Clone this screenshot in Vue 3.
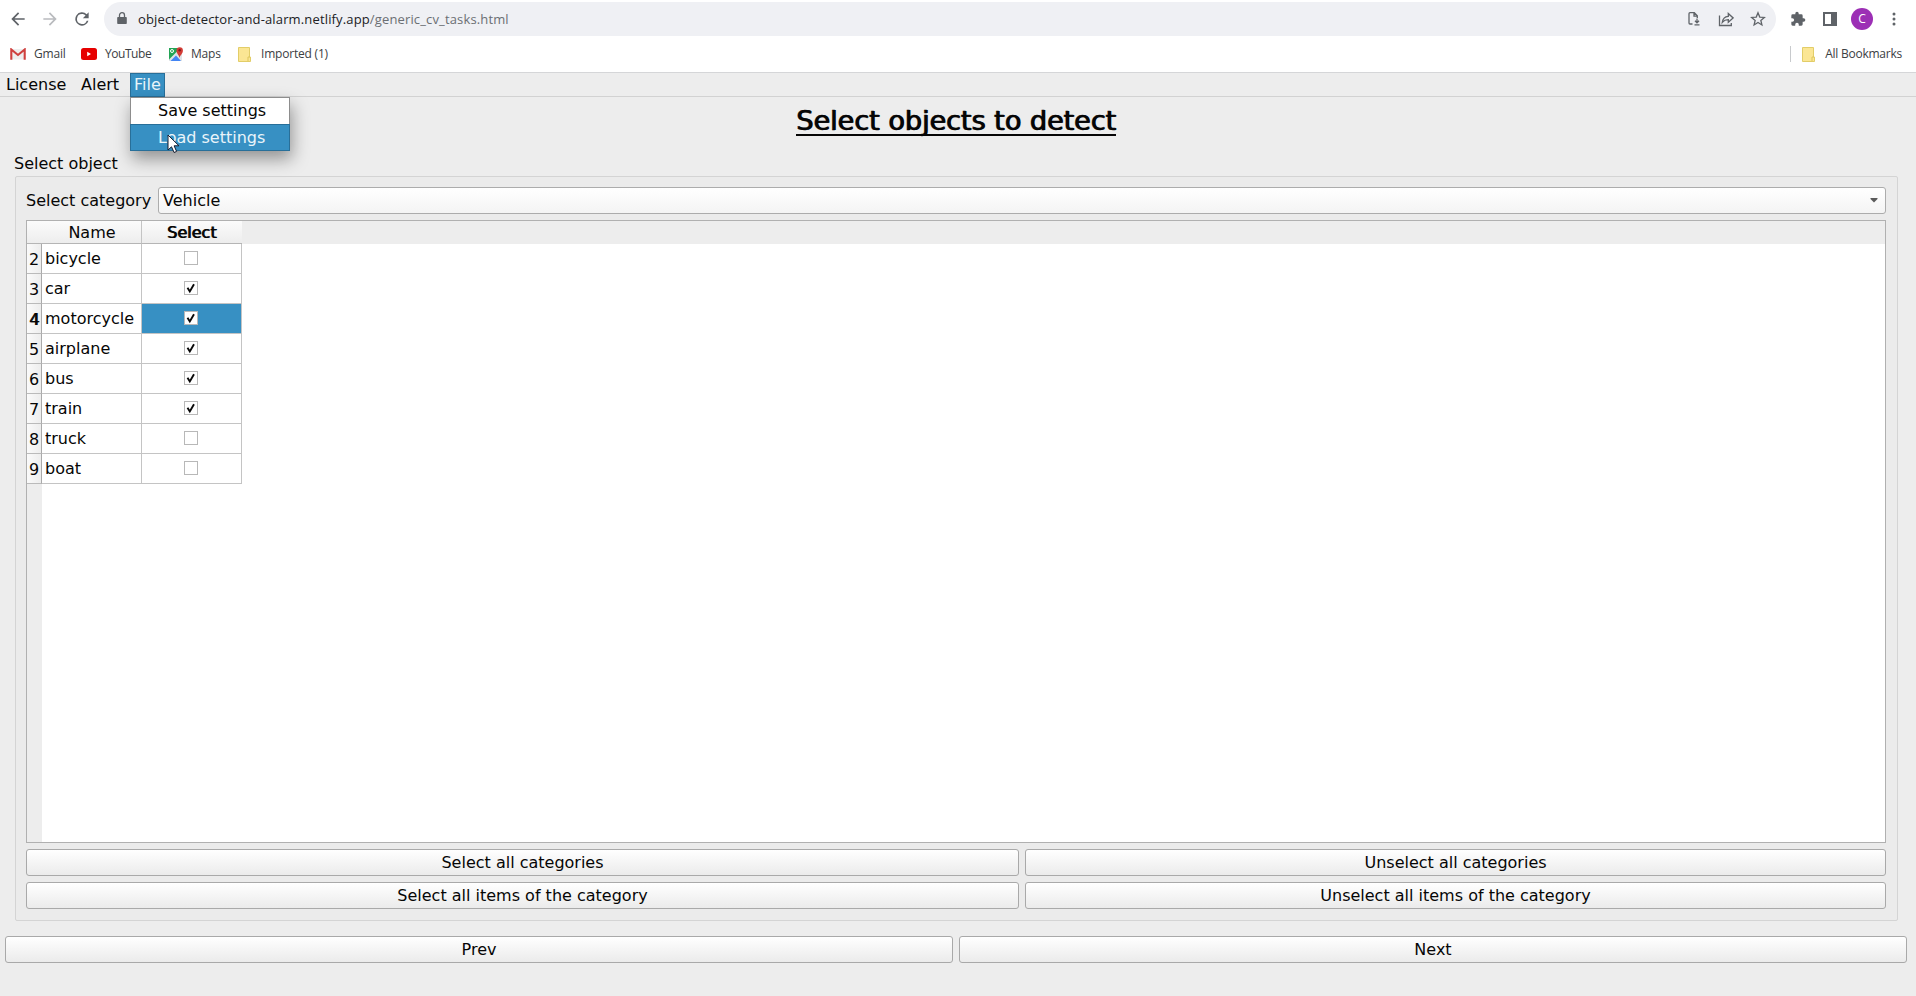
<script setup>
const bookmarks = [
  { id: 'gmail', label: 'Gmail', cls: 'b-gmail' },
  { id: 'youtube', label: 'YouTube', cls: 'b-youtube' },
  { id: 'maps', label: 'Maps', cls: 'b-maps' },
  { id: 'folder', label: 'Imported (1)', cls: 'b-imported' },
]
const rows = [
  { n: 2, name: 'bicycle', on: false },
  { n: 3, name: 'car', on: true },
  { n: 4, name: 'motorcycle', on: true, current: true },
  { n: 5, name: 'airplane', on: true },
  { n: 6, name: 'bus', on: true },
  { n: 7, name: 'train', on: true },
  { n: 8, name: 'truck', on: false },
  { n: 9, name: 'boat', on: false },
]
</script>

<template>
  <div class="window">
    <header class="browser">
      <div class="toolbar">
        <svg class="nav" viewBox="0 0 24 24"><path d="M20 11H7.83l5.59-5.59L12 4l-8 8 8 8 1.410-1.410L7.830 13H20z" /></svg>
        <svg class="nav dim" viewBox="0 0 24 24"><path d="M12 4l-1.410 1.410L16.170 11H4v2h12.170l-5.580 5.590L12 20l8-8z" /></svg>
        <svg class="nav" viewBox="0 0 24 24"><path d="M17.650 6.350A8 8 0 1 0 19.730 14h-2.080A6 6 0 1 1 12 6c1.660 0 3.140.69 4.220 1.780L13 11h7V4z" /></svg>
        <div class="omnibox">
          <svg class="lock" viewBox="0 0 10 13"><path d="M1 5h8a.8.8 0 0 1 .8.8v5.400a.8.8 0 0 1-.8.8H1a.8.8 0 0 1-.8-.8V5.800A.8.8 0 0 1 1 5z" fill="#5f6368" /><path d="M2.500 5V3.200a2.500 2.500 0 0 1 5 0V5" fill="none" stroke="#5f6368" stroke-width="1.300" /></svg>
          <span class="url">object-detector-and-alarm.netlify.app<span class="path">/generic_cv_tasks.html</span></span>
          <div class="omni-icons">
            <svg viewBox="0 0 16 16"><path d="M6.500 13H4a1 1 0 0 1-1-1V2.700a1 1 0 0 1 1-1h4.300l3 3V7M8 1.900v3.200h3.200M11 7.500v4M9 9.800l2 2 2-2M8.500 13.800h5" /></svg>
            <svg viewBox="0 0 16 16"><path d="M1.500 4.500v10h11.800V12M4.300 11.300c.4-3.600 2.400-5.700 6-6V2.500l4.800 4.400-4.800 4.300V8.600c-2.600 0-4.500.9-6 2.700z" /></svg>
            <svg viewBox="0 0 16 16"><path d="M8 1.800l1.750 4.250 4.600.4-3.500 3 1.050 4.500L8 11.550l-3.900 2.400 1.050-4.500-3.500-3 4.600-.4z" /></svg>
          </div>
        </div>
        <svg class="puzzle" viewBox="0 0 24 24"><path d="M20.500 11H19V7a2 2 0 0 0-2-2h-4V3.500a2.500 2.500 0 0 0-5 0V5H4a2 2 0 0 0-2 2v3.800h1.500a2.700 2.700 0 0 1 0 5.400H2V20a2 2 0 0 0 2 2h3.800v-1.500a2.700 2.700 0 0 1 5.400 0V22H17a2 2 0 0 0 2-2v-4h1.500a2.500 2.500 0 0 0 0-5z" /></svg>
        <svg class="panel" viewBox="0 0 14 14"><path fill-rule="evenodd" d="M0 0h14v14H0zM2 2v10h6V2z" /></svg>
        <span class="avatar">C</span>
        <svg class="dots" viewBox="0 0 4 14"><circle cx="2" cy="2" r="1.500" /><circle cx="2" cy="7" r="1.500" /><circle cx="2" cy="12" r="1.500" /></svg>
      </div>
      <div class="bookmarks">
        <div v-for="b in bookmarks" :key="b.id" class="bookmark" :class="b.cls">
          <svg v-if="b.id === 'gmail'" width="16" height="12" viewBox="0 0 16 12"><path d="M1 1h14v10.500H1z" fill="#eee" /><path d="M1.300 11.700V1.500L8 7l6.700-5.500v10.200" fill="none" stroke="#cf403e" stroke-width="2.100" /></svg>
          <svg v-else-if="b.id === 'youtube'" width="16" height="12" viewBox="0 0 16 12"><rect width="16" height="12" rx="2.500" fill="#e60000" /><path d="M6.200 3.800v4.400L10 6z" fill="#fff" /></svg>
          <svg v-else-if="b.id === 'maps'" width="16" height="16" viewBox="0 0 16 16"><path d="M1 2h11v6L7 9l-6 6z" fill="#23a455" /><path d="M1 13.500L12.500 2 14 4v11H1z" fill="#dfe4e8" /><path d="M2.500 15L8 9.500l5 5.500z" fill="#4285f4" /><circle cx="4" cy="5" r="1.500" fill="none" stroke="#fff" /><path d="M11.500 12c-.3-3-3-4-3-7.500a3.200 3.200 0 0 1 6.400 0C14.900 8 12 9 11.500 12z" fill="#d33b35" /><circle cx="11.700" cy="4.300" r="1.200" fill="#80191b" /></svg>
          <svg v-else width="13" height="15" viewBox="0 0 13 15"><path d="M.5.500h11v9.500h1v4.500H.5z" fill="#fbe694" stroke="#e2cd68" /><path d="M10 14v-4h2" fill="none" stroke="#dfc75c" /></svg>
          <span>{{ b.label }}</span>
        </div>
        <div class="bookmark all">
          <svg width="13" height="15" viewBox="0 0 13 15"><path d="M.5.500h11v9.500h1v4.500H.5z" fill="#fbe694" stroke="#e2cd68" /><path d="M10 14v-4h2" fill="none" stroke="#dfc75c" /></svg>
          <span>All Bookmarks</span>
        </div>
      </div>
    </header>

    <nav class="menubar">
      <span class="menu license">License</span>
      <span class="menu alert">Alert</span>
      <div class="menu file">
        File
        <div class="dropdown">
          <div class="item">Save settings</div>
          <div class="item active">Load settings</div>
          <svg class="cursor" width="13" height="20" viewBox="0 0 13 20"><path d="M1 1v15l3.500-3.200 2.600 5.700 2.500-1.100-2.500-5.600H12z" fill="#fff" stroke="#141a2c" /></svg>
        </div>
      </div>
    </nav>

    <main class="content">
      <h1><span>Select objects to detect</span></h1>
      <div class="group-title">Select object</div>
      <section class="group">
        <div class="category">
          <label>Select category</label>
          <div class="combo">Vehicle<svg width="8" height="5" viewBox="0 0 8 5"><path d="M.5 0h7v1L4 4.500.5 1z" fill="#5a5a5a" /></svg></div>
        </div>
        <div class="table">
          <div class="thead">
            <div class="th name">Name</div>
            <div class="th sel">Select</div>
          </div>
          <div class="tbody">
            <div v-for="r in rows" :key="r.n" class="tr">
              <div class="num" :class="{ bold: r.current }">{{ r.n }}</div>
              <div class="cell">{{ r.name }}</div>
              <div class="check" :class="{ current: r.current }">
                <span class="box"><svg v-if="r.on" width="12" height="12" viewBox="0 0 12 12"><path d="M2.500 5.800l2.300 3.700L9 2.200" fill="none" stroke="#080808" stroke-width="1.900" /></svg></span>
              </div>
            </div>
          </div>
        </div>
        <div class="actions">
          <button>Select all categories</button>
          <button>Unselect all categories</button>
          <button>Select all items of the category</button>
          <button>Unselect all items of the category</button>
        </div>
      </section>
      <div class="pager">
        <button>Prev</button>
        <button>Next</button>
      </div>
    </main>
  </div>
</template>

<style>
body { margin: 0; background: #ededed; }
</style>

<style scoped>
* { box-sizing: border-box; }
.window { width: 1916px; height: 996px; overflow: hidden; background: #ededed; color: #060606; font: 16px/20px "DejaVu Sans", sans-serif; white-space: nowrap; }
.browser { height: 73px; background: #fff; border-bottom: 1px solid #d5d6d8; font-family: "Open Sans", "Noto Sans", sans-serif; color: #3c4043; }
.toolbar { height: 38px; display: flex; align-items: center; padding-left: 8px; }
.nav { width: 20px; height: 20px; margin-right: 12px; fill: #5f6368; flex: none; }
.nav.dim { fill: #b9bbbe; }
.omnibox { flex: none; width: 1672px; height: 34px; border-radius: 17px; background: #eff0f4; display: flex; align-items: center; padding-left: 13px; }
.lock { width: 10px; height: 13px; margin-top: -2px; }
.url { margin-left: 11px; font-size: 13px; letter-spacing: .145px; color: #202124; }
.path { color: #6b6f73; }
.omni-icons { margin-left: auto; display: flex; gap: 16px; padding-right: 10px; }
.omni-icons svg { width: 16px; height: 16px; fill: none; stroke: #5f6368; stroke-width: 1.3; }
.puzzle { width: 16px; height: 16px; margin-left: 14px; fill: #5f6368; flex: none; }
.panel { width: 14px; height: 14px; margin-left: 17px; fill: #5f6368; flex: none; }
.avatar { width: 22px; height: 22px; margin-left: 14px; border-radius: 50%; background: #9c2fb5; color: #fff; font-size: 12px; line-height: 22px; text-align: center; flex: none; }
.dots { width: 4px; height: 14px; margin-left: 19px; fill: #5f6368; flex: none; }
.bookmarks { height: 32px; display: flex; align-items: center; font-size: 12px; padding-left: 10px; }
.bookmark { display: flex; align-items: center; gap: 8px; }
.bookmark span { letter-spacing: -.2px; }
.b-gmail { width: 71px; }
.b-youtube { width: 87px; gap: 7px; }
.b-youtube span { letter-spacing: -.4px; }
.b-maps { width: 70px; gap: 7px; }
.b-imported { gap: 10px; }
.b-youtube { gap: 8px; }
.b-youtube span { letter-spacing: -.45px; }
.all { margin-left: auto; margin-right: 14px; padding-left: 11px; gap: 10px; border-left: 1px solid #c8cacd; height: 16px; }
.all span { letter-spacing: -.24px; }

.menubar { height: 24px; display: flex; border-bottom: 1px solid #d2d2d2; line-height: 24px; }
.menu { padding: 0 4px; height: 24px; }
.license { padding-left: 6px; width: 77px; }
.alert { width: 53px; }
.file { width: 35px; position: relative; background: #3790c3; border: 1px solid #286f99; color: #e9f4fa; padding: 0 3px; line-height: 22px; }
.dropdown { position: absolute; z-index: 2; left: -1px; top: 23px; width: 160px; height: 54px; border: 1px solid #8d8d8d; background: #fff; color: #060606; box-shadow: 2px 8px 16px rgba(0,0,0,.38); }
.item { height: 26px; line-height: 26px; padding-left: 27px; }
.item.active { height: 27px; margin: 0 -1px; padding-left: 27px; line-height: 25px; background: #3790c3; border: 1px solid #286f99; color: #e9f4fa; }
.cursor { position: absolute; left: 36px; top: 36px; }

.content { display: flex; flex-direction: column; }
h1 { margin: 0; height: 57px; padding-right: 4px; font-size: 27px; font-weight: 400; line-height: 48px; text-align: center; text-shadow: 1px 0 0 #060606; -webkit-text-stroke: .3px #060606; }
h1 span { display: inline-block; height: 39px; border-bottom: 2px solid #060606; }
.group-title { height: 22px; padding-left: 14px; line-height: 20px; }
.group { margin: 0 18px 0 15px; height: 745px; border: 1px solid #d4d4d4; border-radius: 2px; background: #ebebeb; padding: 10px 11px 10px 10px; }
.category { display: flex; height: 27px; align-items: center; }
.category label { width: 132px; line-height: 25px; }
.combo { flex: 1; height: 27px; border: 1px solid #acacac; border-radius: 3px; background: linear-gradient(#fff, #f4f4f4); display: flex; align-items: center; justify-content: space-between; padding: 0 7px 0 4px; }
.table { margin-top: 6px; height: 623px; border: 1px solid #b0b0b0; background: linear-gradient(90deg, #ededed 15px, #fff 15px); }
.thead { height: 23px; display: flex; background: #ededed; }
.th { height: 23px; background: linear-gradient(#fbfbfb, #ededed); border-bottom: 1px solid #b5b5b5; text-align: center; line-height: 24px; }
.th.name { width: 115px; padding-left: 16px; border-right: 1px solid #c4c4c4; }
.th.sel { width: 100px; padding-right: 1px; }
.bold, .th.sel { text-shadow: 1px 0 0 #060606; }
.tr { display: flex; height: 30px; }
.num { width: 15px; border-right: 1px solid #aaa; border-bottom: 1px solid #bababa; background: linear-gradient(90deg, #fafafa, #ededed); text-align: center; line-height: 31px; }
.cell { width: 100px; padding-left: 3px; line-height: 30px; background: #fff; border-right: 1px solid #c4c4c4; border-bottom: 1px solid #c4c4c4; }
.check { width: 100px; display: flex; justify-content: center; padding-top: 7px; border-right: 1px solid #c4c4c4; border-bottom: 1px solid #c4c4c4; background: #fff; }
.check.current { background: #3790c3; }
.box { width: 14px; height: 14px; border: 1px solid #b8b8b8; background: #fff; display: flex; margin-right: 1px; }
.actions { margin-top: 6px; display: grid; grid-template-columns: 993px 861px; gap: 6px; }
button { height: 27px; border: 1px solid #a9a9a9; border-radius: 3px; background: linear-gradient(#fff, #ebebeb); color: #060606; font: 16px/20px "DejaVu Sans", sans-serif; padding: 0; }
.pager { margin: 15px 9px 0 5px; display: grid; grid-template-columns: 1fr 1fr; gap: 6px; }
</style>
